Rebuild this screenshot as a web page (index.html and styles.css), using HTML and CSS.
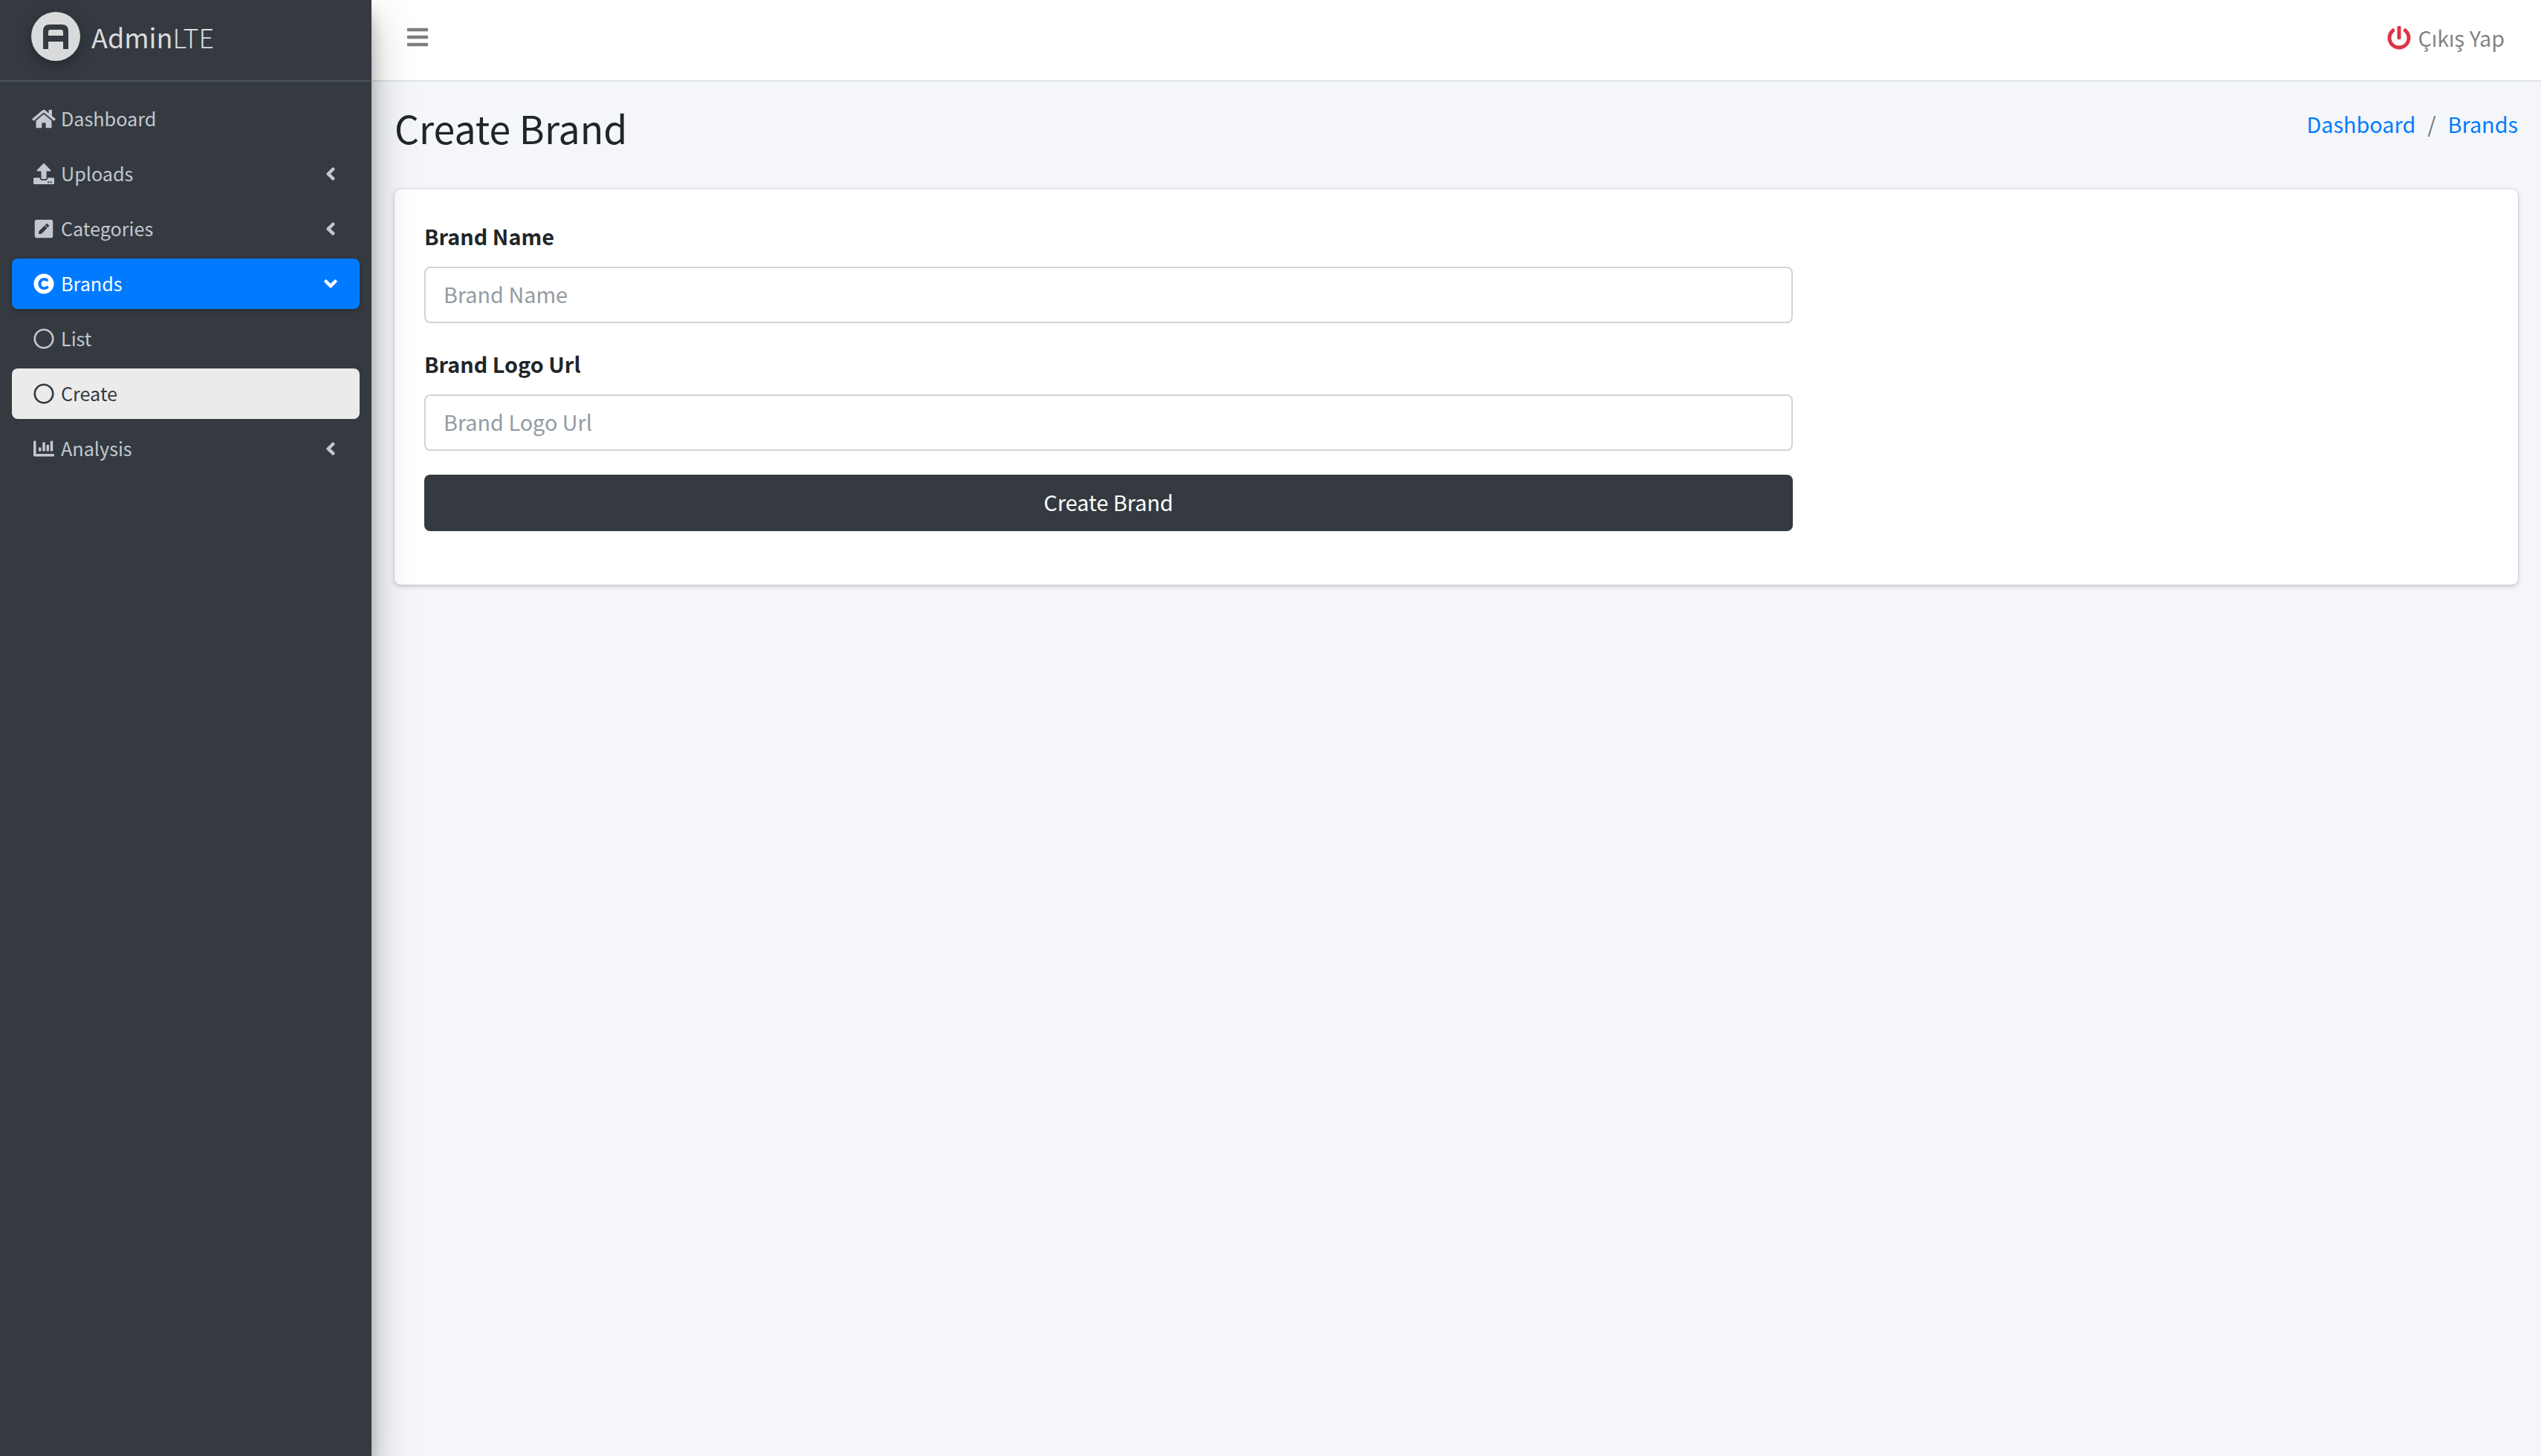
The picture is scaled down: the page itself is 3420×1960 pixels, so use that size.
FILE: index.html
```html
<!DOCTYPE html>
<html lang="tr">
<head>
  <meta charset="UTF-8">
  <title>Create Brand | AdminLTE</title>
  <link rel="stylesheet" href="styles.css">
</head>
<body>
  <aside class="sidebar">
    <a class="brand" href="#">
      <span class="brand-logo">
        <svg viewBox="0 0 34 33"><path fill-rule="evenodd" d="M0 33V9C0 3 3 0 9 0h16c6 0 9 3 9 9v24h-7V23H7v10zM7 15h20v-5c0-2-1-3-3-3H10c-2 0-3 1-3 3z"/></svg>
      </span>
      <span class="brand-text">Admin<span class="light">LTE</span></span>
    </a>
    <nav class="nav">
      <a class="nav-link" href="#">
        <svg class="nav-icon" viewBox="0 0 576 512"><path d="M280.37 148.26L96 300.11V464a16 16 0 0 0 16 16l112.06-.29a16 16 0 0 0 15.92-16V368a16 16 0 0 1 16-16h64a16 16 0 0 1 16 16v95.64a16 16 0 0 0 16 16.05L464 480a16 16 0 0 0 16-16V300L295.67 148.26a12.19 12.19 0 0 0-15.3 0zM571.6 251.47L488 182.56V44.05a12 12 0 0 0-12-12h-56a12 12 0 0 0-12 12v72.61L318.47 43a48 48 0 0 0-61 0L4.34 251.47a12 12 0 0 0-1.6 16.9l25.5 31A12 12 0 0 0 45.15 301l235.22-193.74a12.19 12.19 0 0 1 15.3 0L530.9 301a12 12 0 0 0 16.9-1.6l25.5-31a12 12 0 0 0-1.7-16.93z"/></svg>
        <span>Dashboard</span>
      </a>
      <a class="nav-link" href="#">
        <svg class="nav-icon" viewBox="0 0 512 512"><path d="M296 384h-80c-13.3 0-24-10.7-24-24V192h-87.7c-17.8 0-26.7-21.5-14.1-34.1L242.3 5.7c7.5-7.5 19.8-7.5 27.3 0l152.2 152.2c12.6 12.6 3.7 34.1-14.1 34.1H320v168c0 13.3-10.7 24-24 24zm216-8v112c0 13.3-10.7 24-24 24H24c-13.3 0-24-10.7-24-24V376c0-13.3 10.7-24 24-24h136v8c0 30.9 25.1 56 56 56h80c30.9 0 56-25.1 56-56v-8h136c13.3 0 24 10.7 24 24zm-124 88c0-11-9-20-20-20s-20 9-20 20 9 20 20 20 20-9 20-20zm64 0c0-11-9-20-20-20s-20 9-20 20 9 20 20 20 20-9 20-20z"/></svg>
        <span>Uploads</span>
        <svg class="arrow" viewBox="0 0 256 512"><path d="M31.7 239l136-136c9.4-9.4 24.6-9.4 33.9 0l22.6 22.6c9.4 9.4 9.4 24.6 0 33.9L127.9 256l96.4 96.4c9.4 9.4 9.4 24.6 0 33.9L201.7 412.9c-9.4 9.4-24.6 9.4-33.9 0l-136-136c-9.5-9.4-9.5-24.6-.1-34z"/></svg>
      </a>
      <a class="nav-link" href="#">
        <svg class="nav-icon" viewBox="0 0 448 512"><path d="M400 480H48c-26.5 0-48-21.5-48-48V80c0-26.5 21.5-48 48-48h352c26.5 0 48 21.5 48 48v352c0 26.5-21.5 48-48 48zM238.1 177.9L102.4 313.6l-6.3 57.1c-.8 7.6 5.6 14.1 13.3 13.3l57.1-6.3L302.2 242c2.3-2.3 2.3-6.1 0-8.5L246.7 178c-2.5-2.4-6.3-2.4-8.6-.1zM345 165.1L314.9 135c-9.4-9.4-24.6-9.4-33.9 0l-23.1 23.1c-2.3 2.3-2.3 6.1 0 8.5l55.5 55.5c2.3 2.3 6.1 2.3 8.5 0L345 199c9.3-9.3 9.3-24.5 0-33.9z"/></svg>
        <span>Categories</span>
        <svg class="arrow" viewBox="0 0 256 512"><path d="M31.7 239l136-136c9.4-9.4 24.6-9.4 33.9 0l22.6 22.6c9.4 9.4 9.4 24.6 0 33.9L127.9 256l96.4 96.4c9.4 9.4 9.4 24.6 0 33.9L201.7 412.9c-9.4 9.4-24.6 9.4-33.9 0l-136-136c-9.5-9.4-9.5-24.6-.1-34z"/></svg>
      </a>
      <a class="nav-link active" href="#">
        <svg class="nav-icon" viewBox="0 0 512 512"><path d="M256 8C119.033 8 8 119.033 8 256s111.033 248 248 248 248-111.033 248-248S392.967 8 256 8zm117.134 346.753c-1.592 1.867-39.776 45.731-109.851 45.731-84.692 0-144.484-63.26-144.484-145.567 0-81.303 62.004-143.401 143.762-143.401 66.957 0 101.965 37.315 103.422 38.904a12 12 0 0 1 1.238 14.623l-22.38 34.655c-4.049 6.267-12.774 7.351-18.234 2.295-.233-.216-26.529-23.88-61.88-23.88-46.116 0-73.916 33.575-73.916 76.082 0 39.602 25.514 79.692 74.277 79.692 38.697 0 65.28-28.338 65.544-28.625 5.132-5.565 14.059-5.033 18.508 1.053l24.547 33.572a12.001 12.001 0 0 1-.553 14.866z"/></svg>
        <span>Brands</span>
        <svg class="arrow arrow-down" viewBox="0 0 320 512"><path d="M143 352.3L7 216.3c-9.4-9.4-9.4-24.6 0-33.9l22.6-22.6c9.4-9.4 24.6-9.4 33.9 0l96.4 96.4 96.4-96.4c9.4-9.4 24.6-9.4 33.9 0l22.6 22.6c9.4 9.4 9.4 24.6 0 33.9l-136 136c-9.2 9.4-24.4 9.4-33.8 0z"/></svg>
      </a>
      <a class="nav-link" href="#">
        <svg class="nav-icon" viewBox="0 0 512 512"><circle class="ring" cx="256" cy="256" r="224"/></svg>
        <span>List</span>
      </a>
      <a class="nav-link current" href="#">
        <svg class="nav-icon" viewBox="0 0 512 512"><circle class="ring" cx="256" cy="256" r="224"/></svg>
        <span>Create</span>
      </a>
      <a class="nav-link" href="#">
        <svg class="nav-icon" viewBox="0 0 512 512"><path d="M332.8 320h38.4c6.4 0 12.8-6.4 12.8-12.8V172.8c0-6.4-6.4-12.8-12.8-12.8h-38.4c-6.4 0-12.8 6.4-12.8 12.8v134.4c0 6.4 6.4 12.8 12.8 12.8zm96 0h38.4c6.4 0 12.8-6.4 12.8-12.8V76.8c0-6.4-6.4-12.8-12.8-12.8h-38.4c-6.4 0-12.8 6.4-12.8 12.8v230.4c0 6.4 6.4 12.8 12.8 12.8zm-288 0h38.4c6.4 0 12.8-6.4 12.8-12.8v-70.4c0-6.4-6.4-12.8-12.8-12.8h-38.4c-6.4 0-12.8 6.4-12.8 12.8v70.4c0 6.4 6.4 12.8 12.8 12.8zm96 0h38.4c6.4 0 12.8-6.4 12.8-12.8V108.8c0-6.4-6.4-12.8-12.8-12.8h-38.4c-6.4 0-12.8 6.4-12.8 12.8v198.4c0 6.4 6.4 12.8 12.8 12.8zM496 384H64V80c0-8.84-7.16-16-16-16H16C7.16 64 0 71.16 0 80v336c0 17.67 14.33 32 32 32h464c8.84 0 16-7.16 16-16v-32c0-8.84-7.16-16-16-16z"/></svg>
        <span>Analysis</span>
        <svg class="arrow" viewBox="0 0 256 512"><path d="M31.7 239l136-136c9.4-9.4 24.6-9.4 33.9 0l22.6 22.6c9.4 9.4 9.4 24.6 0 33.9L127.9 256l96.4 96.4c9.4 9.4 9.4 24.6 0 33.9L201.7 412.9c-9.4 9.4-24.6 9.4-33.9 0l-136-136c-9.5-9.4-9.5-24.6-.1-34z"/></svg>
      </a>
    </nav>
  </aside>

  <div class="wrapper">
    <header class="navbar">
      <a class="toggle" href="#">
        <svg viewBox="0 0 448 512"><path d="M16 132h416c8.837 0 16-7.163 16-16V76c0-8.837-7.163-16-16-16H16C7.163 60 0 67.163 0 76v40c0 8.837 7.163 16 16 16zm0 160h416c8.837 0 16-7.163 16-16v-40c0-8.837-7.163-16-16-16H16c-8.837 0-16 7.163-16 16v40c0 8.837 7.163 16 16 16zm0 160h416c8.837 0 16-7.163 16-16v-40c0-8.837-7.163-16-16-16H16c-8.837 0-16 7.163-16 16v40c0 8.837 7.163 16 16 16z"/></svg>
      </a>
      <a class="logout" href="#">
        <svg viewBox="0 0 512 512"><path d="M400 54.1c63 45 104 118.6 104 201.9 0 136.8-110.8 247.7-247.5 248C120 504.3 8.2 393 8 256.4 7.9 173.1 48.9 99.3 111.8 54.2c11.7-8.3 28-4.8 35 7.7L162.6 90c5.9 10.5 3.1 23.8-6.6 31-41.5 30.8-68 79.6-68 134.9-.1 92.3 74.5 168.1 168 168.1 91.6 0 168.6-74.2 168-169.1-.3-51.8-24.7-101.8-68.1-134-9.7-7.2-12.4-20.5-6.5-30.9l15.8-28.1c7-12.4 23.2-16.1 34.8-7.9zM296 264V24c0-13.3-10.7-24-24-24h-32c-13.3 0-24 10.7-24 24v240c0 13.3 10.7 24 24 24h32c13.3 0 24-10.7 24-24z"/></svg>
        <span>Çıkış Yap</span>
      </a>
    </header>

    <main class="content">
      <div class="content-header">
        <h1>Create Brand</h1>
        <ol class="breadcrumb">
          <li><a href="#">Dashboard</a></li>
          <li class="sep">/</li>
          <li><a href="#">Brands</a></li>
        </ol>
      </div>

      <section class="card">
        <form class="brand-form" onsubmit="return false;">
          <label for="brandName">Brand Name</label>
          <input type="text" id="brandName" placeholder="Brand Name">
          <label for="brandLogo">Brand Logo Url</label>
          <input type="text" id="brandLogo" placeholder="Brand Logo Url">
          <button class="submit-btn">Create Brand</button>
        </form>
      </section>
    </main>
  </div>
</body>
</html>
```

FILE: styles.css
```css
* {
  box-sizing: border-box;
}
html, body {
  height: 100%;
}
body {
  margin: 0;
  display: flex;
  min-height: 1960px;
  background: #f4f6f9;
  color: #212529;
  font-family: 'Noto Sans CJK SC', 'Noto Sans', Arial, sans-serif;
  font-size: 28.8px;
  overflow: hidden;
}
a {
  text-decoration: none;
}

.sidebar {
  flex: 0 0 500px;
  background: #343a40;
  box-shadow: 0 28px 56px rgba(0,0,0,0.25), 0 20px 20px rgba(0,0,0,0.22);
  position: relative;
  z-index: 2;
}
.brand {
  height: 110px;
  display: flex;
  align-items: flex-start;
  padding: 16px 0 0 42px;
  border-bottom: 2px solid #4b545c;
}
.brand-logo {
  width: 66px;
  height: 66px;
  border-radius: 50%;
  background: #d8dadc;
  box-shadow: 0 6px 20px rgba(0,0,0,0.3);
  display: flex;
  align-items: center;
  justify-content: center;
}
.brand-logo svg {
  width: 34px;
  height: 33px;
  fill: #343a40;
}
.brand-text {
  margin-left: 15px;
  font-size: 36px;
  line-height: 66px;
  color: #d9dbdd;
}
.brand-text .light {
  font-weight: 300;
}

.nav {
  padding: 16px 16px 0;
  display: flex;
  flex-direction: column;
  gap: 6px;
}
.nav-link {
  height: 68px;
  display: flex;
  align-items: center;
  padding: 0 30px 0 27px;
  border-radius: 8px;
  color: #c2c7d0;
  font-size: 25.2px;
}
.nav-link span {
  margin-top: -2px;
}
.nav-icon {
  width: 32px;
  height: 28px;
  flex: none;
  margin-right: 7px;
  fill: currentColor;
}
.ring {
  fill: none;
  stroke: currentColor;
  stroke-width: 48;
}
.arrow {
  margin-left: auto;
  margin-right: 2px;
  width: 14px;
  height: 28px;
  fill: currentColor;
}
.arrow-down {
  margin-right: 0;
  width: 18px;
}
.nav-link.active {
  background: #007bff;
  color: #fff;
  box-shadow: 0 2px 6px rgba(0,0,0,0.25);
}
.nav-link.current {
  background: rgba(255,255,255,0.9);
  color: #343a40;
}

.wrapper {
  flex: 1;
  display: flex;
  flex-direction: column;
}
.navbar {
  height: 110px;
  background: #fff;
  border-bottom: 2px solid #dee2e6;
  display: flex;
  align-items: center;
  justify-content: space-between;
  padding: 0 49px 2px 48px;
}
.toggle svg {
  display: block;
  width: 28px;
  height: 32px;
  fill: rgba(0,0,0,0.5);
  margin-top: -6px;
}
.logout {
  display: flex;
  align-items: center;
  color: rgba(0,0,0,0.5);
}
.logout span {
  margin-top: -5px;
}
.logout svg {
  width: 32px;
  height: 32px;
  fill: #dc3545;
  margin-right: 9px;
  margin-top: -4px;
}

.content {
  padding: 0 31px;
}
.content-header {
  display: flex;
  justify-content: space-between;
  align-items: flex-start;
  padding-top: 20px;
  height: 145px;
}
.content-header h1 {
  margin: 0;
  font-size: 51.8px;
  font-weight: 400;
  line-height: 84px;
}
.breadcrumb {
  list-style: none;
  margin: 13px 0 0;
  padding: 0;
  display: flex;
  gap: 16px;
  line-height: 48px;
  color: #6c757d;
}
.breadcrumb a {
  color: #007bff;
}

.card {
  background: #fff;
  border-radius: 8px;
  box-shadow: 0 0 2px rgba(0,0,0,0.125), 0 2px 6px rgba(0,0,0,0.2);
  padding: 40px;
  height: 532px;
}
.brand-form {
  width: 1842px;
  display: flex;
  flex-direction: column;
}
.brand-form label {
  font-weight: 700;
  line-height: 46px;
  margin-bottom: 18px;
}
.brand-form input {
  height: 76px;
  padding: 0 0 3px 24px;
  margin-bottom: 32px;
  border: 2px solid #ced4da;
  border-radius: 8px;
  background: #fff;
  font: inherit;
  color: #495057;
  outline: none;
}
.brand-form input::placeholder {
  color: #939ba2;
  opacity: 1;
}
.submit-btn {
  height: 76px;
  padding: 0 0 3px;
  border: none;
  border-radius: 8px;
  background: #343a40;
  color: #fff;
  font: inherit;
  cursor: pointer;
}
```
